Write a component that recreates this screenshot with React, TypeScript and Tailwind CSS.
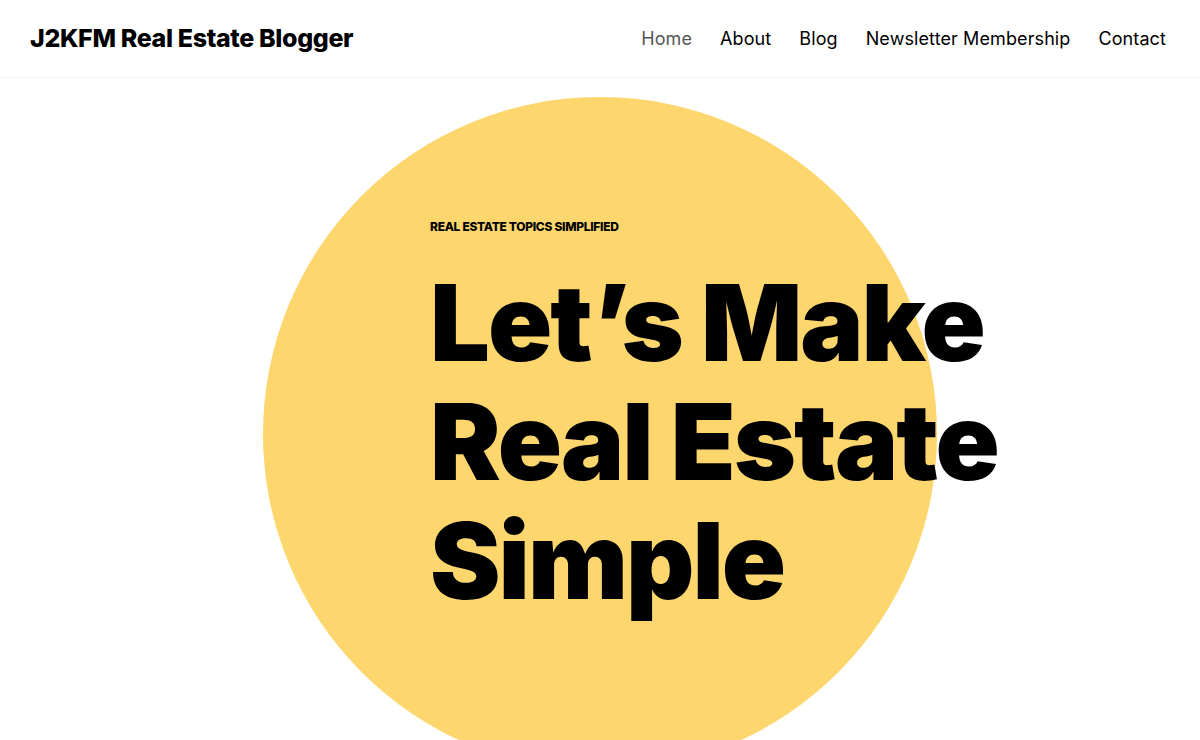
const NAV = [
  { label: "Home", active: true },
  { label: "About" },
  { label: "Blog" },
  { label: "Newsletter Membership" },
  { label: "Contact" },
];

const FONT = "font-['Inter','Noto_Sans',sans-serif]";

export default function App() {
  return (
    <div className={`min-h-[740px] w-full overflow-hidden bg-white text-black ${FONT}`}>
      <header className="flex h-[78px] items-center justify-between border-b border-[#f3f3f3] pl-[30px] pr-[34px]">
        <a className="text-[25px] font-extrabold tracking-[-0.35px] text-black">J2KFM Real Estate Blogger</a>
        <nav className="flex items-center gap-[28px] text-[18px] tracking-[0.1px]">
          {NAV.map((item) => (
            <a
              key={item.label}
              className={item.active ? "text-[#555555]" : "text-black"}
            >
              {item.label}
            </a>
          ))}
        </nav>
      </header>

      <section className="relative h-[662px]">
        {/* Yellow disc behind the hero copy */}
        <div className="pointer-events-none absolute left-[263px] top-[19px] size-[674px] rounded-full bg-[#fed66e]" />

        <div className="relative pl-[430px] pt-[140px]">
          <p className="text-[12px] font-extrabold uppercase tracking-[-0.3px]">
            Real Estate Topics Simplified
          </p>
          <h1 className="mt-[27px] text-[106px] font-black leading-[119px] tracking-[-2px]">
            Let’s Make
            <br />
            Real Estate
            <br />
            Simple
          </h1>
        </div>
      </section>
    </div>
  );
}
